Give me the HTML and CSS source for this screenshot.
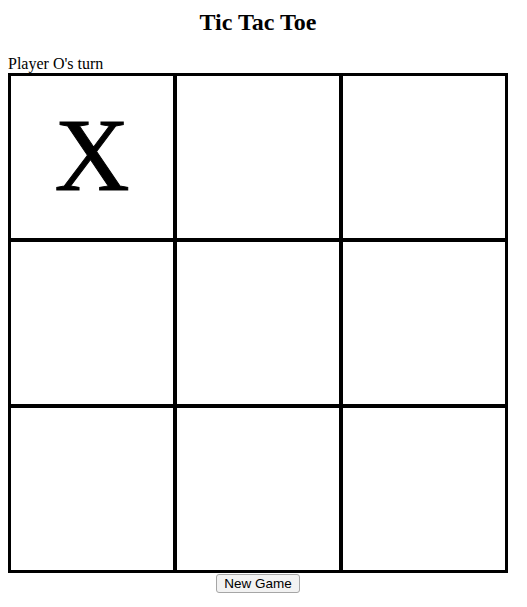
FILE: index.html
```html
<!DOCTYPE html>
<html>
<head>
    <title>Tic Tac Toe</title>
    <link rel="stylesheet" href="styles.css">
</head>
<body>
    <div class="game">
        <h1 class="title">Tic Tac Toe</h1>
        <div class="status" id="status">Player O's turn</div>
        <div class="board" id="board">
            <div class="cell" onclick="play(0)">X</div>
            <div class="cell" onclick="play(1)"></div>
            <div class="cell" onclick="play(2)"></div>
            <div class="cell" onclick="play(3)"></div>
            <div class="cell" onclick="play(4)"></div>
            <div class="cell" onclick="play(5)"></div>
            <div class="cell" onclick="play(6)"></div>
            <div class="cell" onclick="play(7)"></div>
            <div class="cell" onclick="play(8)"></div>
        </div>
        <button class="reset" onclick="newGame()">New Game</button>
    </div>

    <script>
        let cells = document.querySelectorAll('.cell');
        let status = document.getElementById('status');
        let player = 'O';
        let over = false;

        function winner() {
            let lines = [[0,1,2],[3,4,5],[6,7,8],[0,3,6],[1,4,7],[2,5,8],[0,4,8],[2,4,6]];
            for (let l of lines) {
                let a = cells[l[0]].innerText;
                if (a && a === cells[l[1]].innerText && a === cells[l[2]].innerText) return a;
            }
            return null;
        }

        function play(i) {
            if (over || cells[i].innerText !== '') return;
            cells[i].innerText = player;
            let w = winner();
            if (w) {
                status.innerText = 'Player ' + w + ' wins!';
                over = true;
                return;
            }
            if ([...cells].every(c => c.innerText !== '')) {
                status.innerText = "It's a draw";
                over = true;
                return;
            }
            player = player === 'X' ? 'O' : 'X';
            status.innerText = "Player " + player + "'s turn";
        }

        function newGame() {
            cells.forEach(c => c.innerText = '');
            player = 'X';
            over = false;
            status.innerText = "Player X's turn";
        }
    </script>
</body>
</html>
```

FILE: styles.css
```css
body {
    margin: 8px;
    font-family: "Liberation Serif", "Times New Roman", serif;
    font-size: 16px;
    color: #000;
    background: #fff;
}
.game {
    width: 500px;
    text-align: center;
}
.title {
    font-size: 24px;
    margin: 0 0 18px;
    line-height: 28px;
}
.status {
    text-align: left;
    line-height: 19px;
}
.board {
    display: grid;
    grid-template-columns: repeat(3, 1fr);
    border: 1px solid #000;
}
.cell {
    box-sizing: border-box;
    height: 166px;
    padding-bottom: 6px;
    border: 2px solid #000;
    display: flex;
    align-items: center;
    justify-content: center;
    font-size: 104px;
    -webkit-text-stroke: 1px #000;
    cursor: pointer;
}
.reset {
    font-family: "Liberation Sans", Arial, sans-serif;
    font-size: 13.5px;
    padding: 1px 7px;
    margin-top: 1px;
    background: #f2f2f2;
    border: 1px solid #a6a6a6;
    border-radius: 3px;
    color: #000;
}
```
